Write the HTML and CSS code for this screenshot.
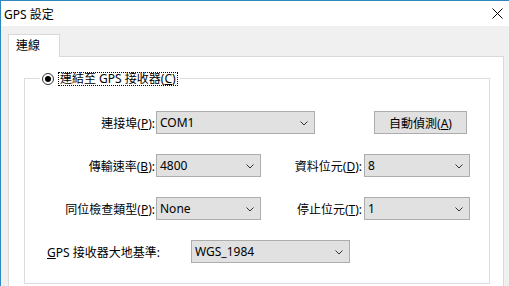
FILE: index.html
```html
<!DOCTYPE html>
<html lang="zh-Hant">
<head>
  <meta charset="utf-8" />
  <title>GPS 設定</title>
  <link rel="stylesheet" href="styles.css">
</head>
<body>
  <div class="window">
    <div class="titlebar">
      <span class="title">GPS 設定</span>
      <svg class="close" width="11" height="11" viewBox="0 0 11 11"><path d="M0.5 0.5L10.5 10.5M10.5 0.5L0.5 10.5" stroke="#000" stroke-width="1" fill="none"/></svg>
    </div>
    <div class="client">
      <div class="tabs">
        <div class="tab">連線</div>
      </div>
      <div class="panel">
        <div class="group">
          <div class="legend">
            <span class="radio"><span class="dot"></span></span>
            <span class="focus">連結至 GPS 接收器(<u>C</u>)</span>
          </div>
          <div class="rows">
            <div class="row">
              <span class="lbl lbl-main">連接埠(<u>P</u>):</span>
              <div class="combo combo-wide"><span>COM1</span><svg width="8" height="5" viewBox="0 0 8 5"><path d="M0.5 0.5L4 4L7.5 0.5" stroke="#333" fill="none"/></svg></div>
              <button class="btn">自動偵測(<u>A</u>)</button>
            </div>
            <div class="row">
              <span class="lbl lbl-main">傳輸速率(<u>B</u>):</span>
              <div class="combo combo-small"><span>4800</span><svg width="8" height="5" viewBox="0 0 8 5"><path d="M0.5 0.5L4 4L7.5 0.5" stroke="#333" fill="none"/></svg></div>
              <span class="lbl lbl-side">資料位元(<u>D</u>):</span>
              <div class="combo combo-side"><span>8</span><svg width="8" height="5" viewBox="0 0 8 5"><path d="M0.5 0.5L4 4L7.5 0.5" stroke="#333" fill="none"/></svg></div>
            </div>
            <div class="row">
              <span class="lbl lbl-main">同位檢查類型(<u>P</u>):</span>
              <div class="combo combo-small"><span>None</span><svg width="8" height="5" viewBox="0 0 8 5"><path d="M0.5 0.5L4 4L7.5 0.5" stroke="#333" fill="none"/></svg></div>
              <span class="lbl lbl-side">停止位元(<u>T</u>):</span>
              <div class="combo combo-side"><span>1</span><svg width="8" height="5" viewBox="0 0 8 5"><path d="M0.5 0.5L4 4L7.5 0.5" stroke="#333" fill="none"/></svg></div>
            </div>
            <div class="row row-datum">
              <span class="lbl lbl-datum"><u>G</u>PS 接收器大地基準:</span>
              <div class="combo combo-wide"><span>WGS_1984</span><svg width="8" height="5" viewBox="0 0 8 5"><path d="M0.5 0.5L4 4L7.5 0.5" stroke="#333" fill="none"/></svg></div>
            </div>
          </div>
        </div>
      </div>
    </div>
  </div>
</body>
</html>
```

FILE: styles.css
```css
*{margin:0;padding:0;box-sizing:border-box;}
html,body{width:100%;height:100%;overflow:hidden;}
body{
  font-family:"Noto Sans","Noto Sans CJK TC",sans-serif;
  font-size:12px;
  color:#000;
  background:#f0f0f0;
}
u{text-underline-offset:1px;}
.window{
  height:286px;
  border-top:1px solid #2f87c0;
  border-left:1px solid #2f87c0;
}
.titlebar{
  height:25px;
  background:#fff;
  display:flex;
  align-items:center;
  justify-content:space-between;
  padding:0 6px 0 3px;
}
.close{display:block;}
.client{
  padding:8px 5px 0 7px;
}
.tabs{display:flex;}
.tab{
  position:relative;
  z-index:1;
  width:52px;
  height:23px;
  margin-bottom:-1px;
  padding-left:7px;
  line-height:21px;
  background:#fff;
  border:1px solid #d9d9d9;
  border-bottom:none;
}
.panel{
  height:230px;
  background:#fff;
  border:1px solid #d9d9d9;
  border-bottom:none;
  padding:21px 13px 0 15px;
}
.group{
  height:206px;
  border:1px solid #dcdcdc;
}
.legend{
  display:flex;
  align-items:center;
  width:fit-content;
  height:15px;
  margin:-8px 0 0 15px;
  padding:0 2px;
  background:#fff;
}
.radio{
  width:12px;
  height:12px;
  border:1px solid #333;
  border-radius:50%;
  display:flex;
  align-items:center;
  justify-content:center;
  margin-right:4px;
}
.dot{
  width:6px;
  height:6px;
  border-radius:50%;
  background:#000;
}
.focus{
  border:1px dotted #000;
  padding:0 1px;
  line-height:12px;
}
.rows{
  display:flex;
  flex-direction:column;
  gap:20px;
  margin-top:25px;
}
.row{
  display:flex;
  align-items:center;
  height:23px;
}
.lbl{white-space:nowrap;}
.lbl-main{
  width:130px;
  text-align:right;
  margin-right:1px;
}
.lbl-side{
  width:101px;
  text-align:right;
  margin-right:2px;
}
.row-datum{padding-left:22px;}
.lbl-datum{width:144px;}
.combo{
  height:23px;
  display:flex;
  align-items:center;
  justify-content:space-between;
  padding:0 6px 0 3px;
  background:#e1e1e1;
  border:1px solid #adadad;
}
.combo svg{display:block;margin-top:1px;}
.combo-wide{width:159px;}
.combo-small{width:105px;}
.combo-side{width:106px;}
.btn{
  width:93px;
  height:23px;
  margin-left:59px;
  font:inherit;
  color:#000;
  background:#e1e1e1;
  border:1px solid #adadad;
}
```
